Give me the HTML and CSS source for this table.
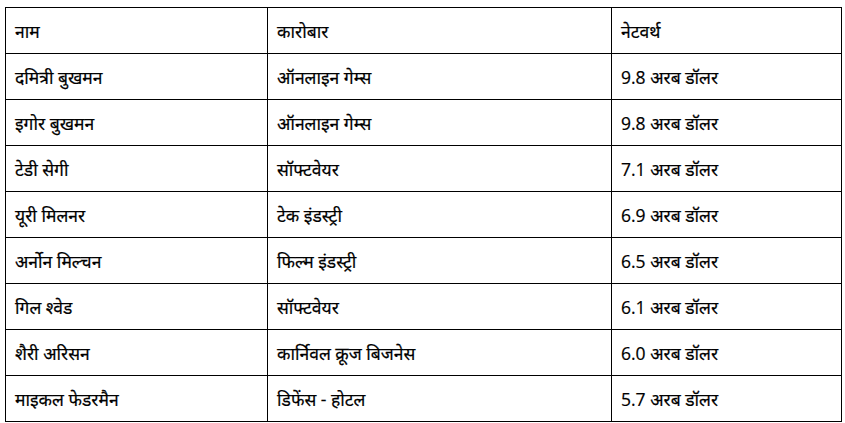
FILE: index.html
```html
<!DOCTYPE html>
<html lang="hi">
<head>
<meta charset="utf-8">
<link rel="stylesheet" href="styles.css">
</head>
<body>
<table class="rich">
  <colgroup><col class="c1"><col class="c2"><col class="c3"></colgroup>
  <tr><td>नाम</td><td>कारोबार</td><td>नेटवर्थ</td></tr>
  <tr><td>दमित्री बुखमन</td><td>ऑनलाइन गेम्स</td><td>9.8 अरब डॉलर</td></tr>
  <tr><td>इगोर बुखमन</td><td>ऑनलाइन गेम्स</td><td>9.8 अरब डॉलर</td></tr>
  <tr><td>टेडी सेगी</td><td>सॉफ्टवेयर</td><td>7.1 अरब डॉलर</td></tr>
  <tr><td>यूरी मिलनर</td><td>टेक इंडस्ट्री</td><td>6.9 अरब डॉलर</td></tr>
  <tr><td>अर्नोन मिल्चन</td><td>फिल्म इंडस्ट्री</td><td>6.5 अरब डॉलर</td></tr>
  <tr><td>गिल श्वेड</td><td>सॉफ्टवेयर</td><td>6.1 अरब डॉलर</td></tr>
  <tr><td>शैरी अरिसन</td><td>कार्निवल क्रूज बिजनेस</td><td>6.0 अरब डॉलर</td></tr>
  <tr><td>माइकल फेडरमैन</td><td>डिफेंस - होटल</td><td>5.7 अरब डॉलर</td></tr>
</table>
</body>
</html>
```
FILE: styles.css
```css
html, body {
  margin: 0;
  padding: 0;
  background: #fff;
}
body {
  padding: 7px 0 0 5px;
  font-family: "Open Sans", "Noto Sans", "Liberation Sans", sans-serif;
  font-size: 17.5px;
  color: #000;
}
.rich {
  border-collapse: collapse;
  width: 836px;
  table-layout: fixed;
}
.c1 { width: 262px; }
.c2 { width: 344px; }
.c3 { width: 230px; }
.rich td {
  border: 1px solid #000;
  height: 45px;
  padding: 0 9px;
  box-sizing: border-box;
  vertical-align: middle;
  line-height: 20px;
  -webkit-text-stroke: 0.2px #000;
}
.rich tr { height: 46px; }
```
